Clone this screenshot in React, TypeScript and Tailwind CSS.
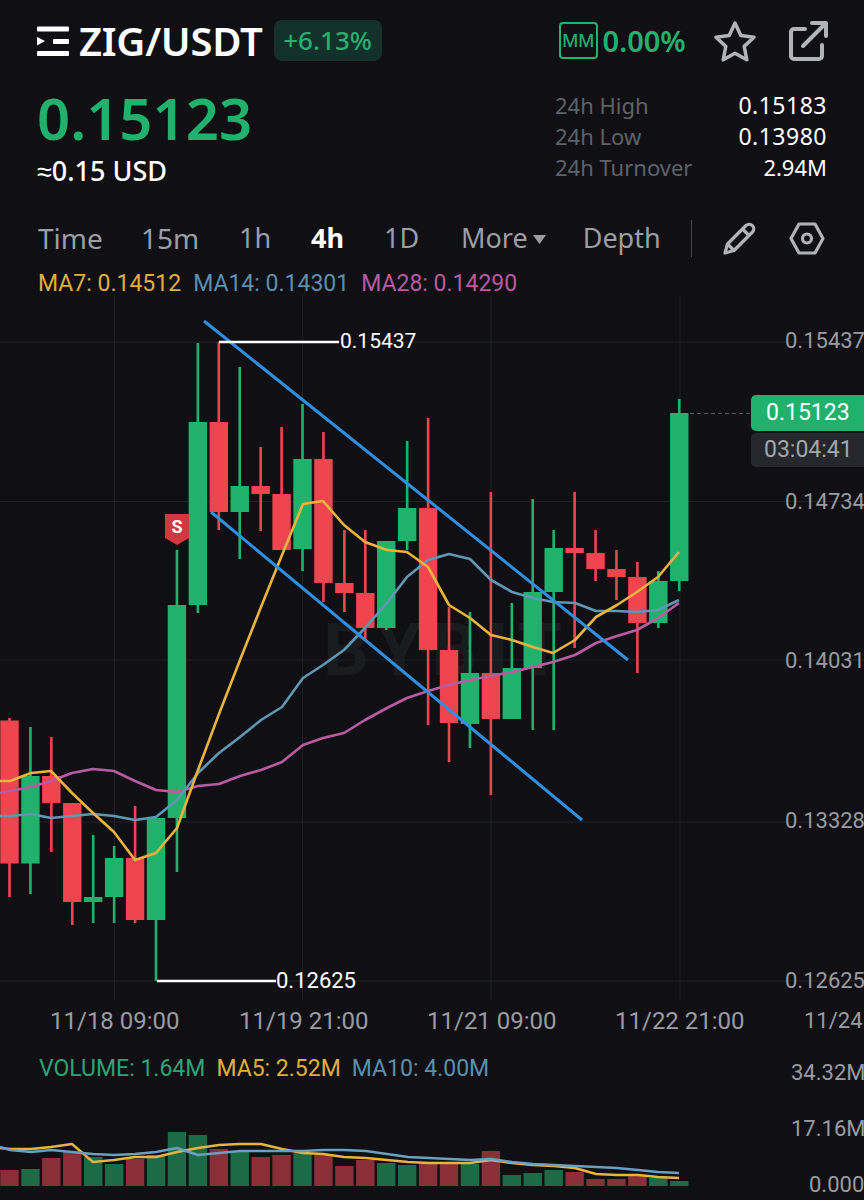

const GREEN = '#20b26c'
const RED = '#f0454f'
const step = 20.93
const cx = (i: number) => 9.5 + step * i

// high, body top, body bottom, low, green?
const candles: [number, number, number, number, boolean][] = [
  [718, 720.5, 863.5, 897, false],
  [727, 776, 863.5, 894, true],
  [737, 776, 803, 852, false],
  [803, 803, 902, 925, false],
  [835, 897, 902, 923, true],
  [846, 858, 897, 923, true],
  [806, 858, 920, 923, false],
  [818, 818, 920, 981, true],
  [550, 605, 818, 872, true],
  [343, 422, 605, 613, true],
  [342, 422, 512, 530, false],
  [367, 486, 512, 559, true],
  [447, 486, 494, 531, false],
  [427, 494, 550, 550, false],
  [404, 459, 549, 571, true],
  [432, 459, 583, 602, false],
  [530, 583, 593, 612, false],
  [530, 593, 628, 640, false],
  [541, 541, 628, 630, true],
  [441, 508, 541, 550, true],
  [418, 508, 650, 725, false],
  [607, 650, 723, 762, false],
  [612, 673, 724, 748, true],
  [492, 673, 719, 795, false],
  [603, 668, 719, 719, true],
  [499, 592, 668, 730, true],
  [530, 548, 592, 730, true],
  [492, 548, 553, 648, false],
  [530, 553, 569, 581, false],
  [550, 569, 577, 600, false],
  [562, 577, 623, 673, false],
  [571, 581, 623, 628, true],
  [399, 413, 581, 591, true],
]

const ma7 = '0,781 10,781 31,773 51,771 72,793 93,813 114,832 135,860 156,853 177,828 198,770 219,714 240,660 261,607 282,555 303,504 323,501 344,525 365,542 387,550 407,552 428,567 449,605 470,618 491,635 512,640 533,647 553,653 575,640 596,617 617,605 637,592 658,577 679,552'
const ma14 = '0,816 10,816 31,814 51,818 72,816 93,814 114,816 135,820 156,817 177,800 198,773 219,753 240,737 261,720 282,707 303,678 323,665 344,650 365,628 387,603 407,577 428,560 449,554 470,559 491,580 512,592 533,598 553,602 575,603 596,611 617,611 637,612 658,610 679,600'
const ma28 = '0,793 10,791 31,787 51,781 72,773 93,769 114,771 135,781 156,790 177,792 198,786 219,784 240,776 261,770 282,762 303,745 323,738 344,733 365,720 387,708 407,698 428,691 449,685 470,680 491,676 512,672 533,667 553,662 575,655 596,643 617,636 637,630 658,618 679,603'

const vols: [number, boolean][] = [
  [1170, false], [1169, true], [1158, false], [1152, false], [1157, true], [1164, true], [1159, false], [1155, true],
  [1132, true], [1135, true], [1149, false], [1152, true], [1157, false], [1155, false], [1153, true], [1155, false],
  [1166, false], [1160, false], [1163, true], [1165, true], [1164, false], [1163, false], [1164, true], [1151, false],
  [1175, true], [1173, true], [1170, true], [1172, false], [1179, false], [1179, false], [1176, false], [1178, true], [1181, true],
]
const volMa5 = '0,1148 10,1149 31,1149 51,1147 72,1144 93,1162 114,1160 135,1157 156,1157 177,1152 198,1148 219,1145 240,1144 261,1144 282,1149 303,1153 323,1154 344,1157 366,1158 387,1160 408,1162 429,1163 447,1163 470,1163 491,1160 512,1163 533,1165 554,1166 575,1168 596,1174 617,1175 638,1175 658,1177 679,1178'
const volMa10 = '0,1147 10,1150 31,1152 51,1150 72,1152 93,1154 114,1155 135,1154 156,1152 177,1148 198,1155 219,1153 240,1151 261,1151 282,1151 303,1151 323,1150 344,1150 366,1151 387,1154 408,1157 429,1158 470,1160 491,1159 512,1162 533,1164 554,1165 575,1166 596,1167 617,1168 638,1170 658,1172 679,1173'

const gridX = [114.5, 302.5, 491, 680]
const gridY = [342, 501.5, 660, 822, 981]
const priceLabels: [string, number][] = [
  ['0.15437', 341],
  ['0.14734', 502],
  ['0.14031', 661],
  ['0.13328', 821],
  ['0.12625', 981],
]

function Logo() {
  return (
    <svg width="32" height="30" viewBox="0 0 32 30" fill="#fff">
      <rect x="0" y="0.5" width="32" height="5" rx="1" />
      <path d="M0 11l8 4-8 4.5z" />
      <rect x="16" y="13" width="16" height="5" rx="1" />
      <rect x="0" y="25" width="32" height="5" rx="1" />
    </svg>
  )
}

function Tab({ label, active, className }: { label: string; active?: boolean; className?: string }) {
  return <span className={`${active ? 'font-bold text-white' : 'text-[#9b9ea3]'} ${className ?? ''}`}>{label}</span>
}

function Stat({ label, value, className }: { label: string; value: string; className?: string }) {
  return (
    <div className="flex h-[31px] items-center justify-between">
      <span className="text-[#5f6268]">{label}</span>
      <span className={`text-white ${className ?? 'text-[23px] tracking-[0.5px]'}`}>{value}</span>
    </div>
  )
}

export default function App() {
  return (
    <div className="h-[1200px] w-[864px] overflow-hidden bg-[#101014] font-['Noto_Sans',sans-serif]">
      {/* header */}
      <div className="h-[295px] pl-[37px] pr-[37px]">
        <div className="flex h-[61px] items-end">
          <div className="flex h-[41px] items-center">
            <Logo />
            <span className="ml-[10px] text-[40px] font-semibold tracking-[-0.25px] text-white">ZIG/USDT</span>
            <span className="ml-[11px] flex h-[41px] w-[108px] items-center justify-center rounded-[8px] bg-[#14302a] text-[26px] font-medium text-[#25b06f]">
              +6.13%
            </span>
            <div className="flex items-center">
              <span className="ml-[177px] flex h-[37px] w-[39px] items-center justify-center rounded-[4px] border-2 border-[#25b06f] text-[18px] font-medium tracking-[-0.5px] text-[#25b06f]">
                MM
              </span>
              <span className="ml-[5px] text-[29px] font-semibold text-[#25b06f]">0.00%</span>
              <svg className="ml-[27px]" width="44" height="42" viewBox="0 0 44 42" fill="none" stroke="#b1b3b8" strokeWidth="3.5" strokeLinejoin="round">
                <path d="M22 3l5.8 12.6 13.2 1.6-9.8 9.2 2.6 13.4L22 33.2 10.2 39.8l2.6-13.4L3 17.2l13.2-1.6z" />
              </svg>
              <svg className="ml-[31px]" width="40" height="41" viewBox="0 0 40 41" fill="none" stroke="#b1b3b8" strokeWidth="4" strokeLinecap="round" strokeLinejoin="round">
                <path d="M17 9H6a3 3 0 0 0-3 3v24a3 3 0 0 0 3 3h25a3 3 0 0 0 3-3V25" />
                <path d="M15 26L37 4M24 3h14v13" />
              </svg>
            </div>
          </div>
        </div>

        <div className="flex h-[155px] items-start justify-between">
          <div>
            <div className="mt-[22px] text-[58px] leading-[70px] font-semibold text-[#20b26c]">0.15123</div>
            <div className="mt-[2px] text-[27px] leading-[32px] font-medium text-white">≈0.15 USD</div>
          </div>
          <div className="mt-[29px] w-[272px] text-[22px]">
            <Stat label="24h High" value="0.15183" />
            <Stat label="24h Low" value="0.13980" />
            <Stat label="24h Turnover" value="2.94M" className="text-[22px]" />
          </div>
        </div>

        <div className="flex h-[44px] items-center pl-[1px] text-[27px]">
          <Tab label="Time" className="w-[103px] text-[28px]" />
          <Tab label="15m" className="w-[98px] text-[28px]" />
          <Tab label="1h" className="w-[72px]" />
          <Tab label="4h" active className="w-[73px]" />
          <Tab label="1D" className="w-[77px]" />
          <Tab label="More" />
          <svg className="ml-[5px] mt-[3px]" width="13" height="9" viewBox="0 0 13 9" fill="#9b9ea3">
            <path d="M0 0h13L6.5 9z" />
          </svg>
          <Tab label="Depth" className="ml-[37px]" />
          <div className="ml-[30px] h-[37px] w-px bg-[#46484d]" />
          <svg className="ml-[31px]" width="34" height="34" viewBox="0 0 34 34" fill="none" stroke="#b1b3b8" strokeWidth="3.2" strokeLinejoin="round">
            <path d="M2 32l2.5-9L23 4.5a4.6 4.6 0 0 1 6.5 6.5L11 29.5z" />
            <path d="M19.5 8l6.5 6.5M4.5 23l6.5 6.5" />
          </svg>
          <svg className="ml-[32px]" width="36" height="33" viewBox="0 0 36 33" fill="none" stroke="#b1b3b8" strokeWidth="3.2" strokeLinejoin="round">
            <path d="M10 2h16l8 14.5L26 31H10L2 16.5z" />
            <circle cx="18" cy="16.5" r="4.5" />
          </svg>
        </div>

        <div className="flex h-[35px] items-start gap-[12px] pl-[1px] pt-[10px] font-['Roboto',sans-serif] text-[23px] leading-[28px]">
          <span className="text-[#e0ae3f]">MA7: 0.14512</span>
          <span className="text-[#5a8fb0]">MA14: 0.14301</span>
          <span className="text-[#b75aa2]">MA28: 0.14290</span>
        </div>
      </div>

      {/* main chart */}
      <div className="relative h-[705px] font-['Roboto',sans-serif]">
        <span className="absolute left-[323px] top-[320px] text-[72px] leading-[72px] font-bold tracking-[10px] text-[#1a1b1f]">BYBIT</span>
        <svg className="absolute inset-0" width="864" height="705" viewBox="0 295 864 705" fill="none">
          {gridX.map((x) => (
            <line key={x} x1={x} x2={x} y1={295} y2={1000} stroke="#1f2024" strokeWidth="1" />
          ))}
          {gridY.map((y) => (
            <line key={y} x1={0} x2={864} y1={y} y2={y} stroke="#1f2024" strokeWidth="1" />
          ))}
          {candles.map(([high, top, bottom, low, up], i) => (
            <g key={i} fill={up ? GREEN : RED}>
              <rect x={cx(i) - 1.3} y={high} width={2.6} height={low - high} />
              <rect x={cx(i) - 9.2} y={top} width={18.4} height={bottom - top} />
            </g>
          ))}
          <polyline points={ma28} stroke="#b85ba3" strokeWidth="2.6" strokeLinejoin="round" />
          <polyline points={ma14} stroke="#5f97b5" strokeWidth="2.6" strokeLinejoin="round" />
          <polyline points={ma7} stroke="#e8b33e" strokeWidth="2.6" strokeLinejoin="round" />
          <line x1={204} y1={321} x2={628} y2={660} stroke="#2f8fe0" strokeWidth="3" />
          <line x1={211} y1={512} x2={582} y2={820} stroke="#2f8fe0" strokeWidth="3" />
          <line x1={219} y1={342} x2={339} y2={342} stroke="#fff" strokeWidth="2.4" />
          <line x1={157} y1={981} x2={276} y2={981} stroke="#fff" strokeWidth="2.4" />
          <line x1={690} y1={413.5} x2={751} y2={413.5} stroke="#55575c" strokeWidth="1" strokeDasharray="4 3" />
          <path d="M165 514h24v24l-12 7-12-7z" fill="#cf3a40" />
        </svg>

        <span className="absolute left-[165px] top-[219px] flex h-[24px] w-[24px] items-center justify-center text-[18px] font-bold text-white">S</span>
        <span className="absolute left-[340px] top-[32px] text-[21px] leading-[28px] text-white">0.15437</span>
        <span className="absolute left-[276px] top-[672px] text-[22px] leading-[28px] text-white">0.12625</span>

        {priceLabels.map(([label, y]) => (
          <span key={label} className="absolute left-[785px] text-[22px] leading-[28px] text-[#9a9ca0]" style={{ top: y - 295 - 14 }}>
            {label}
          </span>
        ))}

        <div className="absolute left-[751px] top-[100px] flex h-[36px] w-[113px] items-center rounded-l-[5px] bg-[#20b26c] pl-[15px] pt-[1px] text-[23px] text-white">0.15123</div>
        <div className="absolute left-[751px] top-[138px] flex h-[34px] w-[113px] items-center rounded-l-[5px] bg-[#25272c] pl-[13px] text-[23px] text-[#a4a6aa]">03:04:41</div>
      </div>

      {/* time axis */}
      <div className="relative h-[40px] pt-[1px] font-['Roboto',sans-serif] text-[24px] leading-[40px] text-[#9a9ca0]">
        <span className="absolute left-[50px]">11/18 09:00</span>
        <span className="absolute left-[239px]">11/19 21:00</span>
        <span className="absolute left-[427px]">11/21 09:00</span>
        <span className="absolute left-[615px]">11/22 21:00</span>
        <span className="absolute left-[804px] text-[22px]">11/24</span>
      </div>

      {/* volume */}
      <div className="relative h-[160px] font-['Roboto',sans-serif] text-[23px] leading-[28px]">
        <div className="flex gap-[11px] pl-[39px] pt-[15px]">
          <span className="text-[#2ba574]">VOLUME: 1.64M</span>
          <span className="text-[#e0ae3f]">MA5: 2.52M</span>
          <span className="text-[#5a8fb0]">MA10: 4.00M</span>
        </div>
        <svg className="absolute left-0 top-[60px]" width="864" height="100" viewBox="0 1100 864 100" fill="none">
          {vols.map(([top, up], i) => (
            <rect key={i} x={cx(i) - 9.2} y={top} width={18.4} height={1186 - top} fill={up ? '#1c6b46' : '#8a2f37'} />
          ))}
          <polyline points={volMa5} stroke="#e8b33e" strokeWidth="2.4" strokeLinejoin="round" />
          <polyline points={volMa10} stroke="#6a9fc0" strokeWidth="2.4" strokeLinejoin="round" />
        </svg>
        <span className="absolute left-[791px] top-[19px] text-[22px] text-[#9a9ca0]">34.32M</span>
        <span className="absolute left-[791px] top-[75px] text-[22px] text-[#9a9ca0]">17.16M</span>
        <span className="absolute left-[809px] top-[131px] text-[22px] text-[#9a9ca0]">0.000</span>
      </div>
    </div>
  )
}
